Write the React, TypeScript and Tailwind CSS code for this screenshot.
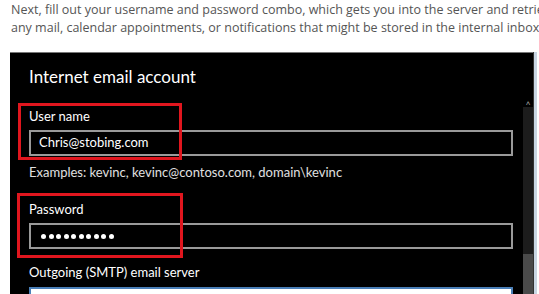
import React from 'react';

const Label: React.FC<{ children: React.ReactNode; className?: string }> = ({ children, className }) => (
  <div className={`text-[13px] leading-[16px] text-white ${className ?? ''}`}>{children}</div>
);

const Box: React.FC<{ children?: React.ReactNode; className?: string }> = ({ children, className }) => (
  <div className={`mr-[10px] h-[26px] border-2 border-[#9a9a9a] flex items-center pl-[8px] text-[13px] text-white ${className ?? ''}`}>
    {children}
  </div>
);

export default function App() {
  const dots = Array.from({ length: 10 });
  return (
    <div className="w-[539px] h-[294px] overflow-hidden bg-white" style={{ fontFamily: '"Open Sans", sans-serif' }}>
      <div className="pl-[11px] pt-[1px] text-[12.5px] leading-[18px] text-[#555] whitespace-nowrap">
        <p>Next, fill out your username and password combo, which gets you into the server and retrieve</p>
        <p>any mail, calendar appointments, or notifications that might be stored in the internal inbox.</p>
      </div>

      <div className="ml-[10px] mt-[15px] flex h-[260px]">
        {/* window content */}
        <div className="relative flex-1 bg-black border-t border-[#777]" style={{ fontFamily: 'Lato, sans-serif' }}>
          <div className="pl-[19px] pt-[12px]">
            <h2 className="text-[17px] leading-[24px] text-white">Internet email account</h2>

            <Label className="mt-[19px]">User name</Label>
            <Box className="mt-[6px]">Chris@stobing.com</Box>
            <div className="mt-[8px] text-[13px] leading-[16px] text-[#e0e0e0]">
              Examples: kevinc, kevinc@contoso.com, domain\kevinc
            </div>

            <Label className="mt-[21px]">Password</Label>
            <Box className="mt-[6px] gap-[2.5px] pl-[10px]">
              {dots.map((_, i) => (
                <span key={i} className="w-[5px] h-[5px] rounded-full bg-white" />
              ))}
            </Box>

            <Label className="mt-[15px]">Outgoing (SMTP) email server</Label>
            <div className="mt-[7px] mr-[10px] h-[27px] bg-white border-2 border-[#4a7fb8]" />
          </div>

          {/* red annotation boxes */}
          <div className="absolute left-[8px] top-[50px] w-[164px] h-[57px] border-[3px] border-[#e0161e]" />
          <div className="absolute left-[7px] top-[140px] w-[166px] h-[65px] border-[3px] border-[#e0161e]" />
        </div>

        {/* scrollbar */}
        <div className="w-[10px] bg-black border-t border-[#777] flex flex-col">
          <div className="h-[46px]" />
          <div className="h-[8px] text-[8px] leading-[8px] text-[#aaa] text-center">˄</div>
          <div className="h-[147px] bg-[#1c1c1c]" />
          <div className="flex-1 bg-[#4a4a4a]" />
        </div>
        <div className="w-[1px] bg-[#333]" />
        <div className="w-[3px] bg-[#c9d6e3]" />
        <div className="w-[2px] bg-white" />
      </div>
    </div>
  );
}
